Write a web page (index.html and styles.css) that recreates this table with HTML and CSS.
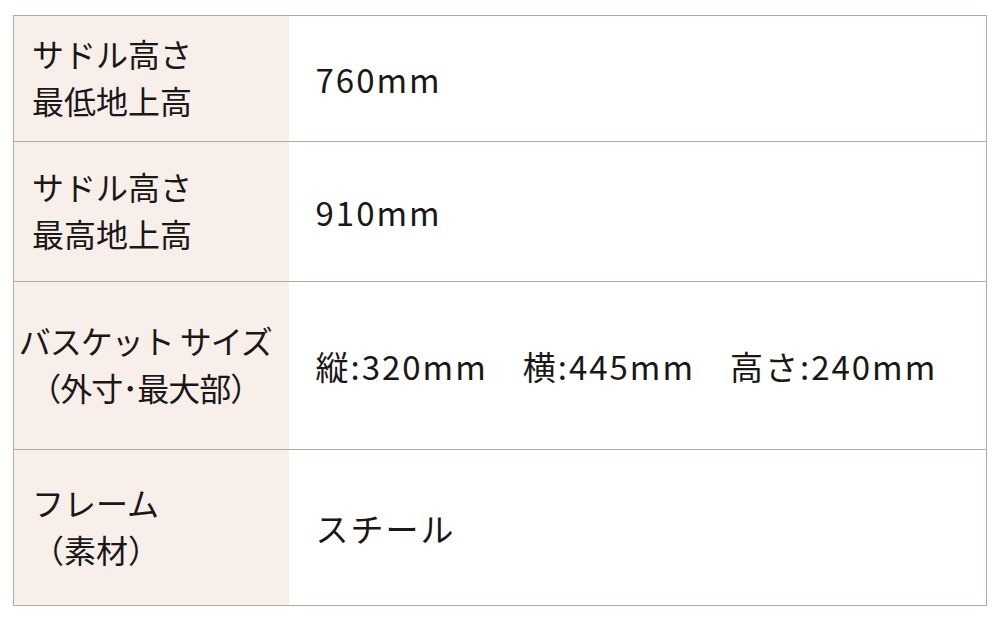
FILE: index.html
```html
<!DOCTYPE html>
<html lang="ja">
<head>
<meta charset="utf-8">
<link rel="stylesheet" href="styles.css">
</head>
<body>
<table class="spec">
  <tr class="r1">
    <th class="label">サドル高さ<br>最低地上高</th>
    <td class="value">760mm</td>
  </tr>
  <tr class="r2">
    <th class="label">サドル高さ<br>最高地上高</th>
    <td class="value">910mm</td>
  </tr>
  <tr class="r3">
    <th class="label label-center">バスケット サイズ<br>（外寸･最大部）</th>
    <td class="value">縦:320mm　横:445mm　高さ:240mm</td>
  </tr>
  <tr class="r4">
    <th class="label">フレーム<br>（素材）</th>
    <td class="value">スチール</td>
  </tr>
</table>
</body>
</html>
```

FILE: styles.css
```css
html, body {
  margin: 0;
  padding: 0;
  background: #ffffff;
}
body {
  padding: 15px 0 0 13px;
  font-family: "Noto Sans CJK JP", "Noto Sans", sans-serif;
  color: #1a1716;
}
.spec {
  border-collapse: collapse;
  width: 974px;
  border: 1px solid #b5aaa3;
}
.spec tr {
  border-bottom: 1px solid #b5aaa3;
}
.r1 { height: 126px; }
.r2 { height: 140px; }
.r3 { height: 168px; }
.r4 { height: 156px; }
.label {
  width: 275px;
  box-sizing: border-box;
  background: #f8efeb;
  text-align: left;
  font-weight: normal;
  font-size: 32px;
  line-height: 47px;
  padding: 0 0 4px 18px;
  vertical-align: middle;
}
.label-center {
  text-align: center;
  letter-spacing: -1px;
  padding: 0 12px 4px 0;
}
.value {
  padding: 0 0 0 27px;
  font-size: 33px;
  letter-spacing: 2px;
  line-height: 40px;
  vertical-align: middle;
  white-space: nowrap;
}
```
